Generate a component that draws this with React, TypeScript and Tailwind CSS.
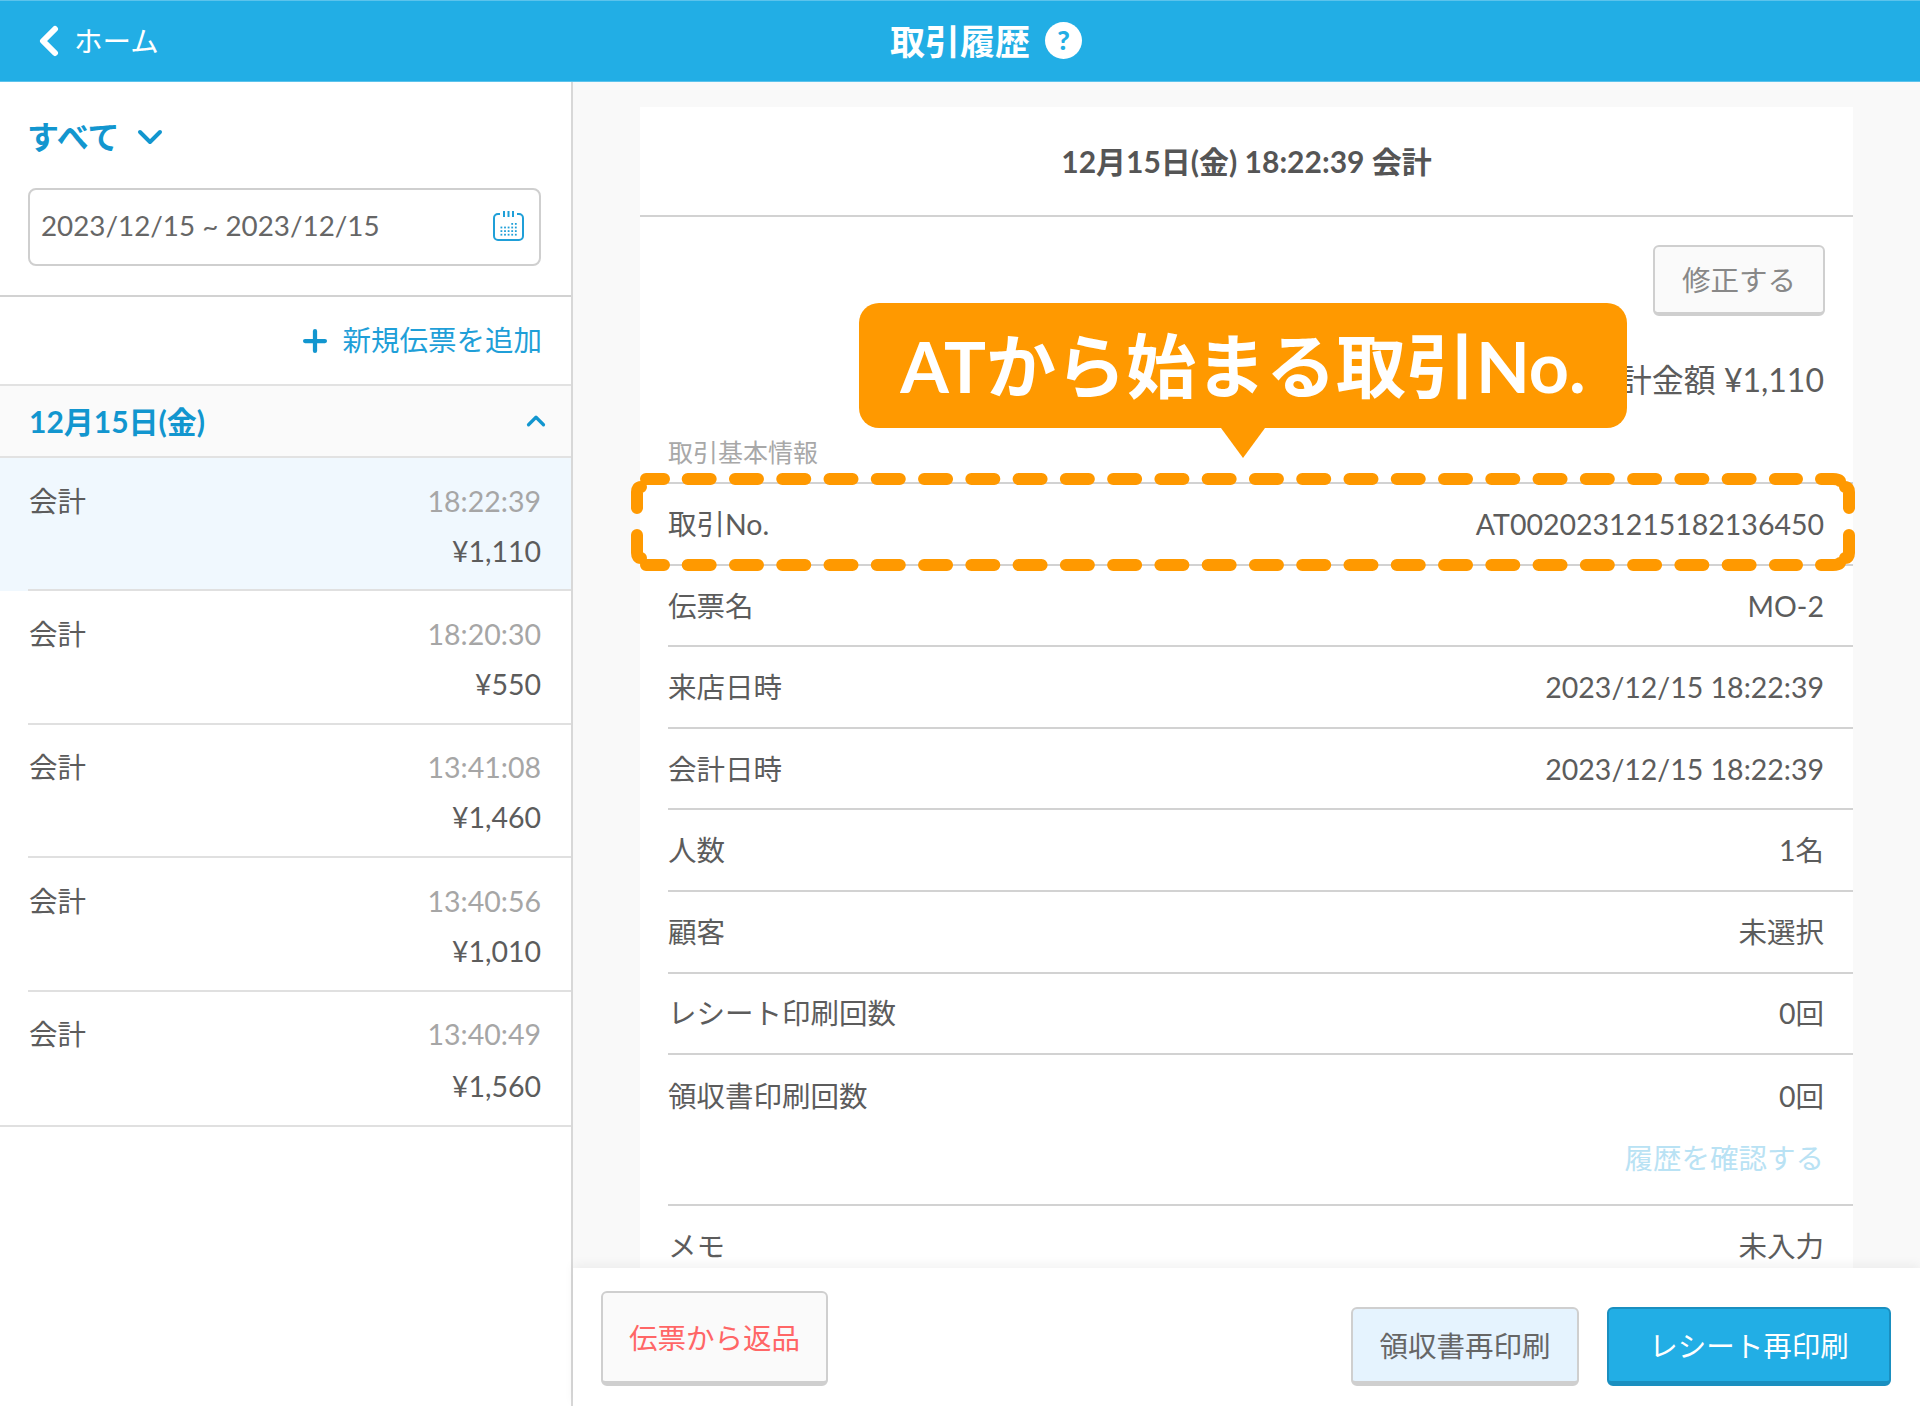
import { ChevronDown, ChevronUp, Plus } from "lucide-react";

const trades = [
  { time: "18:22:39", price: "¥1,110", active: true },
  { time: "18:20:30", price: "¥550" },
  { time: "13:41:08", price: "¥1,460" },
  { time: "13:40:56", price: "¥1,010" },
  { time: "13:40:49", price: "¥1,560" },
];

const details = [
  ["取引No.", "AT0020231215182136450"],
  ["伝票名", "MO-2"],
  ["来店日時", "2023/12/15 18:22:39"],
  ["会計日時", "2023/12/15 18:22:39"],
  ["人数", "1名"],
  ["顧客", "未選択"],
  ["レシート印刷回数", "0回"],
];

function CalendarIcon() {
  const dots = [];
  for (let r = 0; r < 4; r++) {
    for (let c = 0; c < 5; c++) {
      if (r === 0 && c < 3) continue;
      dots.push(<rect key={`${r}-${c}`} x={8.5 + c * 3.6} y={13 + r * 3.6} width="1.8" height="1.8" fill="#1f9fd8" />);
    }
  }
  return (
    <svg width="33" height="32" viewBox="0 0 33 32" fill="none">
      <path d="M8 4H6a4 4 0 0 0-4 4v18a4 4 0 0 0 4 4h21a4 4 0 0 0 4-4V8a4 4 0 0 0-4-4h-2" stroke="#1f9fd8" strokeWidth="2" />
      <path d="M12 1v6M16.5 1v6M21 1v6" stroke="#1f9fd8" strokeWidth="2" />
      {dots}
    </svg>
  );
}

function DetailRow({ label, value }: { label: string; value: string }) {
  return (
    <div className="flex h-[81.6px] items-center justify-between border-t-2 border-[#d2d2d2] pt-px pr-[29px] text-[28.5px] text-[#5c5c5c]">
      <span>{label}</span>
      <span>{value}</span>
    </div>
  );
}

export default function App() {
  return (
    <div className="flex h-[1406px] w-[1920px] flex-col overflow-hidden bg-white font-[Lato,'Noto_Sans_CJK_JP',sans-serif]">
      {/* Top bar */}
      <header className="flex h-[82px] shrink-0 items-center border-y border-[#5cc3ec] bg-[#22aee5] text-white">
        <div className="flex w-[890px] items-center pl-[37px]">
          <svg width="24" height="32" viewBox="0 0 24 32" fill="none">
            <path d="M18 4L6 16l12 12" stroke="white" strokeWidth="6" strokeLinecap="round" strokeLinejoin="round" />
          </svg>
          <span className="ml-[13px] text-[28.5px]">ホーム</span>
        </div>
        <h1 className="text-[35px] leading-none font-bold">取引履歴</h1>
        <span className="ml-[15px] flex h-[37px] w-[37px] -translate-y-px items-center justify-center rounded-full bg-white text-[27px] font-black text-[#22aee5]">?</span>
      </header>

      <div className="flex min-h-0 flex-1">
        {/* Left list */}
        <aside className="w-[573px] shrink-0 border-r-2 border-[#d8d8d8]">
          <div className="border-b-2 border-[#d2d2d2] pt-[34px] pr-[29px] pb-[29px] pl-[28px]">
            <div className="-ml-px flex h-[42px] items-center text-[32px] font-bold text-[#1296cf]">
              すべて
              <ChevronDown className="ml-[11px] h-[40px] w-[40px]" strokeWidth={2.4} />
            </div>
            <div className="mt-[30px] flex h-[78px] w-[513px] items-center justify-between rounded-[8px] border-2 border-[#cfcfcf] pr-[14px] pb-[2px] pl-[11px] text-[27.8px] text-[#666666]">
              <span>2023/12/15 ~ 2023/12/15</span>
              <CalendarIcon />
            </div>
          </div>
          <div className="flex h-[87px] items-center justify-end pr-[29px] text-[28.5px] text-[#1f9fd8]">
            <Plus className="mr-[10px] h-[34px] w-[34px] text-[#1296cf]" strokeWidth={3} />
            新規伝票を追加
          </div>
          <div className="flex h-[74px] items-center justify-between border-y-2 border-[#e2e2e2] bg-[#fafafa] pr-[20px] pl-[29px] text-[30px] font-bold text-[#1296cf]">
            <span>12月15日(金)</span>
            <ChevronUp className="h-[30px] w-[30px]" strokeWidth={2.6} />
          </div>
          {trades.map((t, i) => {
            const last = i === trades.length - 1;
            return (
              <div key={t.time} className={t.active ? "bg-[#f0f8fe]" : ""}>
                <div className={`${last ? "h-[133.4px]" : "h-[131.4px]"} pt-[18px] pr-[30px] pl-[29px] text-[28.5px]`}>
                  <div className="flex h-[50px] items-center justify-between">
                    <span className="text-[#5c5c5c]">会計</span>
                    <span className="text-[#a6a6a6]">{t.time}</span>
                  </div>
                  <div className={`flex h-[50px] items-center justify-end text-[#5c5c5c] ${last ? "mt-[2px]" : ""}`}>{t.price}</div>
                </div>
                <div className={`h-[2px] bg-[#e0e0e0] ${last ? "" : "ml-[28px]"}`} />
              </div>
            );
          })}
        </aside>

        {/* Detail pane */}
        <main className="relative flex min-w-0 flex-1 flex-col bg-[#f9f9f9]">
          <div className="min-h-0 flex-1 overflow-hidden px-[67px] pt-[25px]">
            <section className="bg-white">
              <div className="flex h-[110px] items-center justify-center border-b-2 border-[#d2d2d2] text-[30px] font-bold text-[#555555]">
                12月15日(金) 18:22:39 会計
              </div>
              <div className="pl-[28px]">
                <div className="flex justify-end pt-[28px] pr-[28px]">
                  <button className="h-[71px] w-[172px] rounded-[6px] border-2 border-b-4 border-[#cfcfcf] bg-[#fafafa] pt-[2px] text-[28.5px] text-[#888888]">修正する</button>
                </div>
                <div className="mt-[44px] h-[40px] pr-[29px] text-right text-[32px] leading-[40px] text-[#5c5c5c]">合計金額 ¥1,110</div>
                <div className="mt-[35px] h-[34px] text-[25px] leading-[34px] text-[#a8a8a8]">取引基本情報</div>
                <div className="mt-[13px]">
                  {details.map(([label, value]) => (
                    <DetailRow key={label} label={label} value={value} />
                  ))}
                  <div className="h-[151px] border-t-2 border-[#d2d2d2] pr-[29px] text-[28.5px] text-[#5c5c5c]">
                    <div className="flex h-[83px] items-center justify-between">
                      <span>領収書印刷回数</span>
                      <span>0回</span>
                    </div>
                    <div className="text-right leading-[40px] text-[#b9e2f4]">履歴を確認する</div>
                  </div>
                  <DetailRow label="メモ" value="未入力" />
                </div>
              </div>
            </section>
          </div>

          <footer className="relative flex h-[138px] shrink-0 items-end justify-between bg-white pr-[29px] pb-[20px] pl-[28px] shadow-[0_-4px_10px_rgba(0,0,0,0.05)]">
            <button className="h-[95px] w-[227px] rounded-[6px] border-2 border-b-[5px] border-[#cfcfcf] bg-[#fafafa] pt-[2px] text-[28.5px] text-[#ff6666]">伝票から返品</button>
            <div className="flex gap-[28px]">
              <button className="h-[79px] w-[228px] rounded-[6px] border-2 border-b-[5px] border-[#cfcfcf] bg-[#e5f3fe] pt-[2px] text-[28.5px] text-[#666666]">領収書再印刷</button>
              <button className="h-[79px] w-[284px] rounded-[6px] border-2 border-b-[5px] border-[#1a8fc0] bg-[#22aee5] pt-[2px] text-[28.5px] text-white">レシート再印刷</button>
            </div>
          </footer>

          {/* Annotation over the detail card */}
          <div className="absolute top-[221px] left-[286px] flex h-[125px] w-[768px] items-center justify-center rounded-[20px] bg-[#ff9900] text-[70px] leading-none font-bold whitespace-nowrap text-white">
            ATから始まる取引No.
            <div className="absolute top-[125px] left-[362px] h-0 w-0 border-x-[22px] border-t-[30px] border-x-transparent border-t-[#ff9900]" />
          </div>
          <svg className="absolute top-[389px] left-[55px]" width="1232" height="104" viewBox="0 0 1232 104" fill="none">
            <g stroke="#ff9900" strokeWidth="12" strokeLinecap="round">
              <path d="M59.7 8H1169M59.7 94H1169" strokeDasharray="23 24.27" />
              <path d="M18 8H36M18 94H36M1193 8H1205Q1210 8 1212 10M1193 94H1205Q1210 94 1212 92" />
              <path d="M9 37V21Q9 16 13 16M9 64V82Q9 87 13 87M1221 37V21Q1221 16 1217 16M1221 64V82Q1221 87 1217 87" />
            </g>
          </svg>
        </main>
      </div>
    </div>
  );
}
